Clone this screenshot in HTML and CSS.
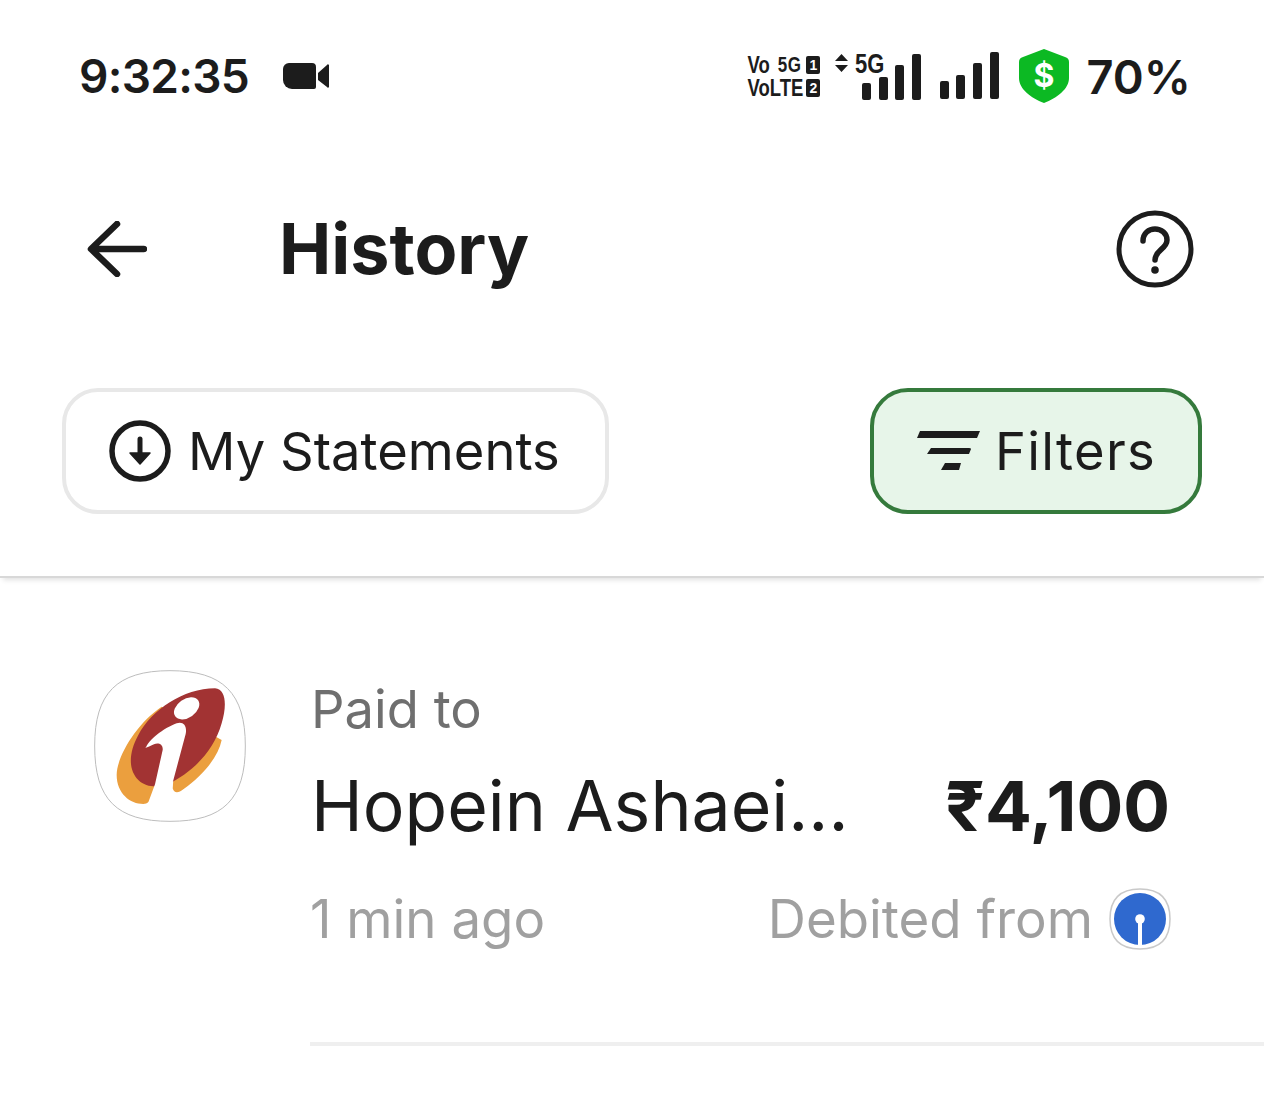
FILE: index.html
```html
<!DOCTYPE html>
<html lang="en">
<head>
    <meta charset="UTF-8">
    <title>History</title>
    <link rel="stylesheet" href="styles.css">
</head>
<body>
    <div class="statusBar">
        <div class="statusLeft">
            <span class="clock">9:32:35</span>
            <svg class="camIcon" viewBox="0 0 46 26">
                <path d="M6 0h23a4 4 0 0 1 4 4v20a2 2 0 0 1-2 2H9a9 9 0 0 1-9-9V6a6 6 0 0 1 6-6z" fill="#1c1c1c"/>
                <path d="M35 10l9-8a1 1 0 0 1 2 1v20a1 1 0 0 1-2 1l-9-7z" fill="#1c1c1c"/>
            </svg>
        </div>
        <div class="statusRight">
            <div class="simInfo">
                <div class="simLine"><span class="simText">Vo</span><span class="simText simGap">5G</span><b>1</b></div>
                <div class="simLine"><span class="simText">VoLTE</span><b>2</b></div>
            </div>
            <svg class="signalOne" viewBox="0 0 87 52">
                <path d="M0 13l6.500-7 6.500 7zM0 17l6.500 7 6.500-7z" fill="#1c1c1c"/>
                <text class="fiveG" transform="translate(20 25) scale(1 1.28)">5G</text>
                <rect x="27" y="35" width="9" height="17" rx="2" fill="#1c1c1c"/>
                <rect x="44" y="29" width="9" height="23" rx="2" fill="#1c1c1c"/>
                <rect x="60" y="17" width="9" height="35" rx="2" fill="#1c1c1c"/>
                <rect x="77" y="6" width="9" height="46" rx="2" fill="#1c1c1c"/>
            </svg>
            <svg class="signalTwo" viewBox="0 0 60 47">
                <rect x="0" y="29" width="9" height="18" rx="2" fill="#1c1c1c"/>
                <rect x="16" y="23" width="9" height="24" rx="2" fill="#1c1c1c"/>
                <rect x="33" y="11" width="9" height="36" rx="2" fill="#1c1c1c"/>
                <rect x="50" y="0" width="9" height="47" rx="2" fill="#1c1c1c"/>
            </svg>
            <svg class="shieldIcon" viewBox="0 0 50 54">
                <path d="M25 0l21 8q4 1 4 5v16c0 11-12 20-25 25C12 49 0 40 0 29V13q0-4 4-5z" fill="#0cb923"/>
                <text class="dollar" x="25" y="38">$</text>
            </svg>
            <span class="battery">70%</span>
        </div>
    </div>

    <div class="header">
        <svg class="backIcon" viewBox="0 0 60 56">
            <path d="M57 28H5M30 3L4 28l26 25" fill="none" stroke="#1c1c1c" stroke-width="6.500" stroke-linecap="round" stroke-linejoin="round"/>
        </svg>
        <h1 class="pageTitle">History</h1>
        <svg class="helpIcon" viewBox="0 0 78 78">
            <circle cx="39" cy="39" r="36" fill="none" stroke="#1c1c1c" stroke-width="5"/>
            <path d="M27 31c0-8 6-12 12-12s12 4 12 11c0 9-12 10-12 20" fill="none" stroke="#1c1c1c" stroke-width="5.500" stroke-linecap="round"/>
            <circle cx="39" cy="60" r="3.800" fill="#1c1c1c"/>
        </svg>
    </div>

    <div class="actions">
        <div class="btn statementsBtn">
            <svg class="downloadIcon" viewBox="0 0 62 62">
                <circle cx="31" cy="31" r="28" fill="none" stroke="#1c1c1c" stroke-width="5.500"/>
                <path d="M31 19v20" stroke="#1c1c1c" stroke-width="5" stroke-linecap="round"/>
                <path d="M21 33h20L31 44z" fill="#1c1c1c" stroke="#1c1c1c" stroke-width="1.500" stroke-linejoin="round"/>
            </svg>
            <span>My Statements</span>
        </div>
        <div class="btn filtersBtn">
            <svg class="filterIcon" viewBox="0 0 63 40">
                <path d="M3 0h60l-3 7H0z" fill="#1c1c1c"/>
                <path d="M14 17h38q2 0 2 1l-2 5H10z" fill="#1c1c1c"/>
                <path d="M28 32h16l-2 7H24z" fill="#1c1c1c"/>
            </svg>
            <span class="filtersLabel">Filters</span>
        </div>
    </div>

    <div class="txnRow">
        <svg class="bankLogo" viewBox="42 30 456 456">
            <path d="M270 32C430 32 496 100 496 258 496 418 430 484 270 484 110 484 44 418 44 258 44 100 110 32 270 32z" fill="#fff" stroke="#bdbdbd" stroke-width="3"/>
            <path d="M245 140C170 190 110 290 110 345c0 55 40 87 80 87 25 0 35-32 45-62l45-10-2 25c4 15 17 15 32 3 60-43 105-98 115-148z" fill="#eb9f3e"/>
            <path d="M405 85c35 3 35 55 20 105-25 90-95 150-160 182-25 10-65 13-90-12-30-30-30-80 0-135C215 150 310 85 405 85z" fill="#a23333"/>
            <path d="M197 265c8-25 53-60 93-75 20-7 32 8 27 32l-39 146-3 32 25 40H200l25-67 23-103c2-17-13-23-26-17-12 4-24 14-25 7z" fill="#fff"/>
            <ellipse cx="320" cy="145" rx="42" ry="28" transform="rotate(-35 320 145)" fill="#fff"/>
        </svg>
        <div class="txnBody">
            <div class="paidTo">Paid to</div>
            <div class="txnLine txnMain">
                <span class="payee">Hopein Ashaei...</span>
                <span class="amount">₹4,100</span>
            </div>
            <div class="txnLine txnMeta">
                <span class="timeAgo">1 min ago</span>
                <span class="debited">Debited from
                    <svg class="sbiLogo" viewBox="0 0 62 62">
                        <path d="M31 1C51 1 61 11 61 31 61 51 51 61 31 61 11 61 1 51 1 31 1 11 11 1 31 1z" fill="#fff" stroke="#c9c9c9" stroke-width="1.500"/>
                        <circle cx="31" cy="31" r="26" fill="#2f69cf"/>
                        <rect x="29" y="32" width="4" height="26" fill="#fff"/>
                        <circle cx="31" cy="31" r="4.800" fill="#fff"/>
                    </svg>
                </span>
            </div>
        </div>
    </div>
</body>
</html>
```

FILE: styles.css
```css
* {
    box-sizing: border-box;
}

body {
    font-family: "Inter", "Liberation Sans", sans-serif;
    margin: 0;
    background: #fff;
    color: #1c1c1c;
}

.statusBar {
    height: 152px;
    display: flex;
    align-items: center;
    justify-content: space-between;
    padding: 0 73px 0 79px;
}

.statusLeft {
    display: flex;
    align-items: center;
    gap: 34px;
}

.clock {
    font-size: 46px;
    font-weight: 600;
    letter-spacing: -0.7px;
}

.camIcon {
    width: 46px;
    height: 26px;
}

.statusRight {
    display: flex;
    align-items: center;
}

.simInfo {
    width: 73px;
    font-family: "Liberation Sans", sans-serif;
    font-weight: 700;
    font-size: 18.500px;
}

.simLine {
    height: 23px;
    display: flex;
    align-items: center;
    justify-content: space-between;
}

.simText {
    display: inline-block;
    line-height: 17px;
    transform: scaleY(1.3);
}

.simLine b {
    flex-shrink: 0;
    width: 14px;
    height: 18px;
    background: #1c1c1c;
    color: #fff;
    border-radius: 2px;
    font-size: 14px;
    line-height: 18px;
    text-align: center;
}

.simGap {
    margin-left: 8px;
    margin-right: auto;
    font-size: 17px;
    letter-spacing: 0.5px;
}

.signalOne {
    width: 87px;
    height: 52px;
    margin-left: 15px;
    margin-bottom: 4px;
}

.fiveG {
    font-family: "Liberation Sans", sans-serif;
    font-weight: 700;
    font-size: 22px;
    fill: #1c1c1c;
}

.signalTwo {
    width: 60px;
    height: 47px;
    margin-left: 18px;
    margin-bottom: 1px;
}

.shieldIcon {
    width: 50px;
    height: 54px;
    margin-left: 19px;
}

.dollar {
    font-family: "Inter", sans-serif;
    font-weight: 700;
    font-size: 32px;
    fill: #fff;
    text-anchor: middle;
}

.battery {
    font-size: 47px;
    font-weight: 600;
    margin-left: 17px;
}

.header {
    height: 194px;
    display: flex;
    align-items: center;
    padding: 0 70px 0 87px;
}

.backIcon {
    width: 60px;
    height: 56px;
}

.pageTitle {
    font-size: 70px;
    font-weight: 700;
    margin: 0 0 2px 132px;
    flex: 1;
}

.helpIcon {
    width: 78px;
    height: 78px;
}

.actions {
    display: flex;
    justify-content: space-between;
    padding: 42px 62px 62px;
    border-bottom: 2px solid #d8d8d8;
    box-shadow: 0 5px 5px -3px rgba(0, 0, 0, 0.12);
}

.btn {
    height: 126px;
    display: flex;
    align-items: center;
    font-size: 52.500px;
    border-width: 4px;
    border-style: solid;
}

.statementsBtn {
    width: 547px;
    border-color: #e8e8e8;
    border-radius: 36px;
    padding-left: 43px;
    gap: 17px;
}

.filtersBtn {
    width: 332px;
    background: #e7f5e9;
    border-color: #357a3c;
    border-radius: 38px;
    padding-left: 43px;
    gap: 15px;
}

.filtersLabel {
    letter-spacing: 1.300px;
}

.downloadIcon {
    width: 62px;
    height: 62px;
}

.filterIcon {
    width: 63px;
    height: 40px;
}

.txnRow {
    display: flex;
    padding: 92px 0 0 94px;
}

.bankLogo {
    width: 152px;
    height: 152px;
    flex-shrink: 0;
}

.txnBody {
    flex: 1;
    margin-left: 64px;
    padding: 9px 93px 91px 0;
    border-bottom: 4px solid #efefef;
}

.paidTo {
    font-size: 52.500px;
    color: #6f6f6f;
    line-height: 60px;
    margin-left: 1px;
}

.txnLine {
    display: flex;
    justify-content: space-between;
    align-items: center;
}

.txnMain {
    margin-top: 24px;
}

.payee {
    font-size: 69.700px;
    margin-left: 1px;
}

.amount {
    font-size: 69.400px;
    font-weight: 700;
    margin-right: 1px;
}

.txnMeta {
    color: #a0a0a0;
    font-size: 52.800px;
    margin-top: 39px;
}

.debited {
    display: flex;
    align-items: center;
    gap: 16px;
}

.sbiLogo {
    width: 62px;
    height: 62px;
}
```
